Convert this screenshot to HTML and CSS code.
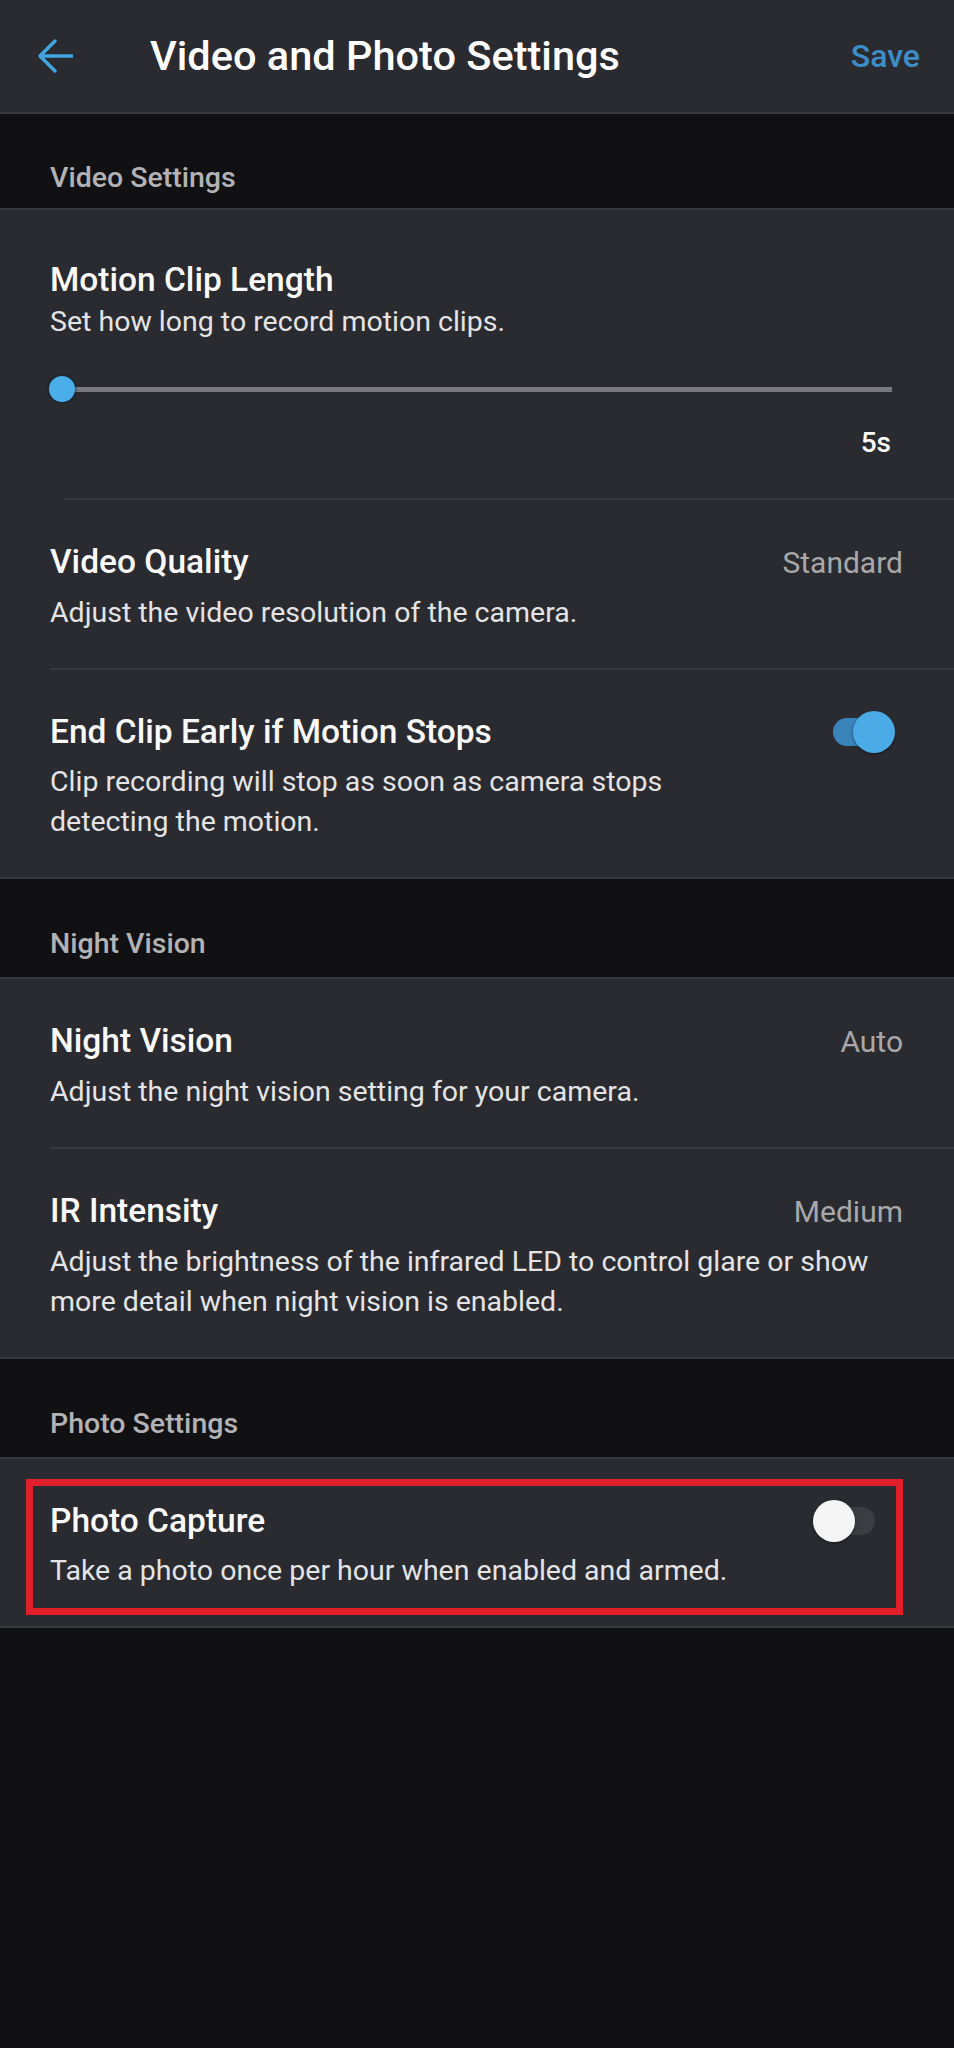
FILE: index.html
```html
<!DOCTYPE html>
<html lang="en">
<head>
<meta charset="utf-8">
<title>Video and Photo Settings</title>
<link rel="stylesheet" href="styles.css">
</head>
<body>
<div class="screen">
  <header class="appbar">
    <svg class="back" viewBox="0 0 36 34" width="36" height="34" aria-hidden="true">
      <path d="M35 17 H3 M18 2 L3 17 L18 32" fill="none" stroke="#41a5df" stroke-width="3.4" stroke-linecap="round" stroke-linejoin="round"/>
    </svg>
    <h1 class="appbar-title">Video and Photo Settings</h1>
    <span class="appbar-action">Save</span>
  </header>

  <div class="section-label first">Video Settings</div>
  <section class="card">
    <div class="row row-motion">
      <div class="row-title">Motion Clip Length</div>
      <div class="row-sub tight">Set how long to record motion clips.</div>
      <div class="slider">
        <span class="slider-thumb"></span>
        <span class="slider-track"></span>
      </div>
      <div class="slider-value">5s</div>
    </div>
    <hr class="divider inset-wide">
    <div class="row">
      <div class="row-head">
        <span class="row-title">Video Quality</span>
        <span class="row-value">Standard</span>
      </div>
      <div class="row-sub">Adjust the video resolution of the camera.</div>
    </div>
    <hr class="divider">
    <div class="row with-switch">
      <div class="row-main">
        <div class="row-title">End Clip Early if Motion Stops</div>
        <div class="row-sub">Clip recording will stop as soon as camera stops detecting the motion.</div>
      </div>
      <span class="switch on"><span class="switch-track"></span><span class="switch-thumb"></span></span>
    </div>
  </section>

  <div class="section-label">Night Vision</div>
  <section class="card">
    <div class="row">
      <div class="row-head">
        <span class="row-title">Night Vision</span>
        <span class="row-value">Auto</span>
      </div>
      <div class="row-sub">Adjust the night vision setting for your camera.</div>
    </div>
    <hr class="divider">
    <div class="row">
      <div class="row-head">
        <span class="row-title">IR Intensity</span>
        <span class="row-value">Medium</span>
      </div>
      <div class="row-sub">Adjust the brightness of the infrared LED to control glare or show more detail when night vision is enabled.</div>
    </div>
  </section>

  <div class="section-label">Photo Settings</div>
  <section class="card card-annotated">
    <div class="row with-switch">
      <div class="row-main">
        <div class="row-title">Photo Capture</div>
        <div class="row-sub">Take a photo once per hour when enabled and armed.</div>
      </div>
      <span class="switch off"><span class="switch-track"></span><span class="switch-thumb"></span></span>
    </div>
    <div class="highlight-box"></div>
  </section>
</div>
</body>
</html>
```

FILE: styles.css
```css
* { box-sizing: border-box; }

html, body {
  margin: 0;
  padding: 0;
  background: #111113;
}

body {
  font-family: Roboto, "Noto Sans", "Liberation Sans", sans-serif;
  color: #f7f7f7;
  -webkit-font-smoothing: antialiased;
}

.screen {
  width: 954px;
  min-height: 2048px;
  background: #111113;
}

/* App bar */
.appbar {
  height: 114px;
  background: #2a2b30;
  border-bottom: 2px solid #38393e;
  display: flex;
  align-items: center;
}

.back {
  margin-left: 37px;
  flex: none;
}

.appbar-title {
  margin: 0 0 0 77px;
  font-size: 41.5px;
  line-height: 40px;
  font-weight: 500;
  color: #ffffff;
}

.appbar-action {
  margin-left: auto;
  margin-right: 34px;
  font-size: 32px;
  line-height: 40px;
  font-weight: 500;
  color: #3d8ec8;
}

/* Section labels */
.section-label {
  padding: 48px 50px 16px;
  font-size: 28.5px;
  line-height: 34px;
  font-weight: 500;
  color: #b3b3b6;
}

.section-label.first {
  padding-top: 47px;
  padding-bottom: 13px;
}

/* Cards */
.card {
  background: #2a2b30;
  border-top: 2px solid #38393e;
  border-bottom: 2px solid #38393e;
}

.card-annotated {
  position: relative;
}

.divider {
  margin: 0 0 0 50px;
  border: 0;
  height: 2px;
  background: #38393e;
}

.divider.inset-wide {
  margin-left: 63px;
}

/* Rows */
.row {
  padding: 42px 51px 35px 50px;
}

.row-motion {
  padding: 50px 51px 38px 50px;
}

.row-head {
  display: flex;
  align-items: baseline;
  justify-content: space-between;
}

.row-title {
  font-size: 33.5px;
  line-height: 40px;
  font-weight: 500;
  color: #fafafa;
}

.row-value {
  font-size: 30px;
  line-height: 40px;
  font-weight: 400;
  color: #a8a8ab;
}

.row-sub {
  margin-top: 10px;
  font-size: 28.5px;
  line-height: 40px;
  font-weight: 400;
  color: #e4e4e6;
}

.row-sub.tight {
  margin-top: 2px;
}

/* Slider */
.slider {
  display: flex;
  align-items: center;
  height: 26px;
  margin: 34px 11px 0 -1px;
}

.slider-thumb {
  width: 26px;
  height: 26px;
  border-radius: 50%;
  background: #4aaee8;
  box-shadow: 0 0 0 2px rgba(10, 30, 50, 0.35);
  flex: none;
  z-index: 1;
}

.slider-track {
  flex: 1;
  height: 5px;
  margin-left: -13px;
  background: #78787c;
}

.slider-value {
  margin: 24px 12px 0 0;
  text-align: right;
  font-size: 28px;
  line-height: 34px;
  font-weight: 500;
  color: #ffffff;
}

/* Switches */
.with-switch {
  display: flex;
  align-items: flex-start;
}

.row-main {
  flex: 1;
  min-width: 0;
}

.switch {
  position: relative;
  flex: none;
  width: 66px;
  height: 42px;
  margin-top: -1px;
  margin-left: 60px;
}

.switch.on {
  margin-right: 8px;
}

.switch.off {
  margin-right: 24px;
}

.switch-track {
  position: absolute;
  left: 4px;
  right: 4px;
  top: 7px;
  height: 28px;
  border-radius: 14px;
}

.switch-thumb {
  position: absolute;
  top: 0;
  width: 42px;
  height: 42px;
  border-radius: 50%;
}

.switch.on .switch-track {
  background: #3984bb;
}

.switch.on .switch-thumb {
  right: 0;
  background: #4aabe6;
  box-shadow: 0 1px 3px rgba(0, 0, 0, 0.45);
}

.switch.off .switch-track {
  background: #3c3d42;
}

.switch.off .switch-thumb {
  left: 0;
  background: #f5f5f5;
  box-shadow: 0 1px 3px rgba(0, 0, 0, 0.45);
}

/* Red annotation box */
.highlight-box {
  position: absolute;
  left: 26px;
  top: 20px;
  width: 877px;
  height: 136px;
  border: 7px solid #e11f2b;
  pointer-events: none;
}
```
